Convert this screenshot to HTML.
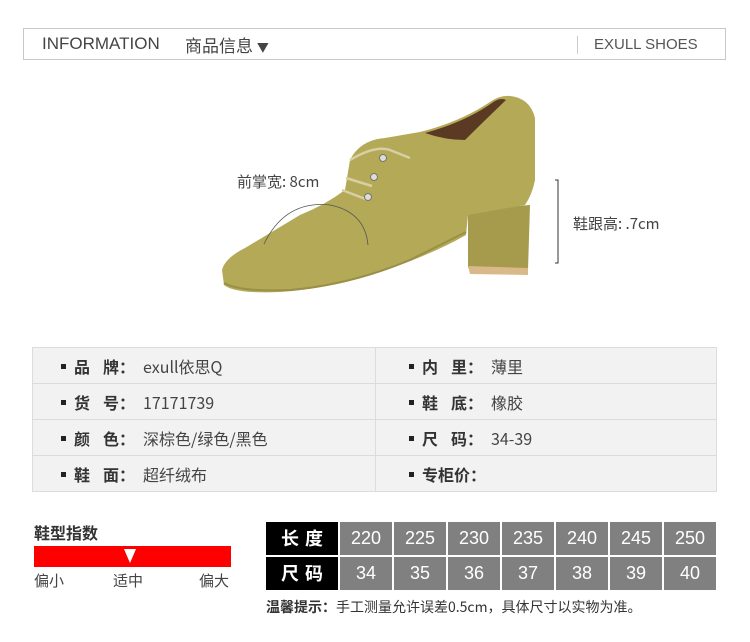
<!DOCTYPE html>
<html><head><meta charset="utf-8">
<style>
*{margin:0;padding:0;box-sizing:border-box}
body{width:750px;height:642px;background:#fff;font-family:"Liberation Sans","Noto Sans CJK SC",sans-serif;position:relative;overflow:hidden;color:#333}
.abs{position:absolute}
.hdr{left:23px;top:28px;width:703px;height:32px;border:1px solid #c8c8c8}
.t{white-space:nowrap}
table.info{position:absolute;left:32px;top:347px;width:685px;border-collapse:collapse;background:#f2f2f2}
table.info td{border:1px solid #dcdcdc;height:36px;font-size:16px;color:#444;font-family:"Noto Sans CJK SC",sans-serif;padding-left:28px;white-space:nowrap}
table.info td.r{padding-left:33px}
.b{display:inline-block;width:5px;height:5px;background:#222;vertical-align:middle;margin-right:8px;position:relative;top:-2px}
.lb{font-weight:bold;color:#333;margin-right:8px}
.lb i{font-style:normal;margin-left:13px}
.sz{position:absolute;font-family:"Noto Sans CJK SC",sans-serif}
.cell{position:absolute;height:33px;background:#808080;color:#fff;font-size:18px;text-align:center;line-height:33px;font-family:"Liberation Sans",sans-serif}
.hc{background:#000;font-weight:bold;font-family:"Noto Sans CJK SC",sans-serif;letter-spacing:6px;padding-left:6px}
</style></head><body>
<div class="abs hdr"></div>
<div class="abs t" style="left:42px;top:34px;font-size:17px;color:#444">INFORMATION</div>
<div class="abs t" style="left:185px;top:32px;font-size:17px;color:#444;font-family:'Noto Sans CJK SC',sans-serif">商品信息 <span style="font-size:12px">▼</span></div>
<div class="abs" style="left:577px;top:36px;width:1px;height:18px;background:#ccc"></div>
<div class="abs t" style="left:594px;top:36px;font-size:15px;color:#555">EXULL SHOES</div>

<svg class="abs" style="left:0;top:0" width="750" height="320" viewBox="0 0 750 320">
 <path d="M468,210 L530,205 L528,270 Q515,276 500,274 L468,268 Z" fill="#a69b4c"/>
 <path d="M468,266 L528,268 L528,275 L470,274 Z" fill="#d9b88a"/>
 <path d="M222,270 Q225,258 245,248 L300,215 Q325,205 345,190 L350,160 Q360,140 385,138 L420,132 Q460,122 490,102 Q500,95 510,96 Q530,98 535,118 L535,180 Q532,195 525,205 L468,215 L466,235 Q440,250 400,265 Q340,288 280,292 Q235,294 224,285 Z" fill="#b3a957"/>
 <path d="M425,133 Q465,122 492,103 Q500,97 506,100 Q480,125 465,140 Q445,140 425,133 Z" fill="#5a3a22"/>
 <path d="M224,283 Q240,292 290,290 Q350,285 410,260 L466,232" stroke="#9a8f47" stroke-width="2" fill="none"/>
 <path d="M350,160 Q375,145 390,150 L410,158 M346,178 L372,186 M342,190 L368,200" stroke="#d8cfa4" stroke-width="2.5" fill="none"/>
 <circle cx="383" cy="158" r="3.5" fill="#ddd" stroke="#776" />
 <circle cx="374" cy="177" r="3.5" fill="#ddd" stroke="#776"/>
 <circle cx="368" cy="197" r="3.5" fill="#ddd" stroke="#776"/>
 <path d="M264,244 Q285,200 330,205 Q365,212 368,245" stroke="#555" stroke-width="0.8" fill="none"/>
 <path d="M555,180 L558,180 L558,263 L555,263" stroke="#333" stroke-width="1" fill="none"/>
</svg>
<div class="abs t" style="left:237px;top:171px;font-size:15px;color:#444;font-family:'Noto Sans CJK SC',sans-serif">前掌宽: 8cm</div>
<div class="abs t" style="left:573px;top:213px;font-size:15px;color:#444;font-family:'Noto Sans CJK SC',sans-serif">鞋跟高: .7cm</div>

<table class="info">
<tr><td style="width:343px"><span class="b"></span><span class="lb">品<i>牌</i>：</span>exull依思Q</td><td class="r"><span class="b"></span><span class="lb">内<i>里</i>：</span>薄里</td></tr>
<tr><td><span class="b"></span><span class="lb">货<i>号</i>：</span>17171739</td><td class="r"><span class="b"></span><span class="lb">鞋<i>底</i>：</span>橡胶</td></tr>
<tr><td><span class="b"></span><span class="lb">颜<i>色</i>：</span>深棕色/绿色/黑色</td><td class="r"><span class="b"></span><span class="lb">尺<i>码</i>：</span>34-39</td></tr>
<tr><td><span class="b"></span><span class="lb">鞋<i>面</i>：</span>超纤绒布</td><td class="r"><span class="b"></span><span class="lb">专柜价：</span></td></tr>
</table>

<div class="sz t" style="left:34px;top:520px;font-size:16px;font-weight:bold;color:#333">鞋型指数</div>
<div class="abs" style="left:34px;top:546px;width:197px;height:21px;background:#f00"></div>
<div class="abs" style="left:124px;top:549px;width:0;height:0;border-left:6px solid transparent;border-right:6px solid transparent;border-top:14px solid #fff"></div>
<div class="sz t" style="left:34px;top:570px;font-size:15px;color:#444">偏小</div>
<div class="sz t" style="left:113px;top:570px;font-size:15px;color:#444">适中</div>
<div class="sz t" style="left:199px;top:570px;font-size:15px;color:#444">偏大</div>

<div class="cell hc" style="left:266px;top:522px;width:72px;">长度</div>
<div class="cell hc" style="left:266px;top:557px;width:72px;">尺码</div>
<div class="cell" style="left:340px;top:522px;width:52px">220</div>
<div class="cell" style="left:394px;top:522px;width:52px">225</div>
<div class="cell" style="left:448px;top:522px;width:52px">230</div>
<div class="cell" style="left:502px;top:522px;width:52px">235</div>
<div class="cell" style="left:556px;top:522px;width:52px">240</div>
<div class="cell" style="left:610px;top:522px;width:52px">245</div>
<div class="cell" style="left:664px;top:522px;width:52px">250</div>
<div class="cell" style="left:340px;top:557px;width:52px">34</div>
<div class="cell" style="left:394px;top:557px;width:52px">35</div>
<div class="cell" style="left:448px;top:557px;width:52px">36</div>
<div class="cell" style="left:502px;top:557px;width:52px">37</div>
<div class="cell" style="left:556px;top:557px;width:52px">38</div>
<div class="cell" style="left:610px;top:557px;width:52px">39</div>
<div class="cell" style="left:664px;top:557px;width:52px">40</div>
<div class="sz t" style="left:266px;top:597px;font-size:14px;color:#333"><b>温馨提示：</b>手工测量允许误差0.5cm，具体尺寸以实物为准。</div>
</body></html>
